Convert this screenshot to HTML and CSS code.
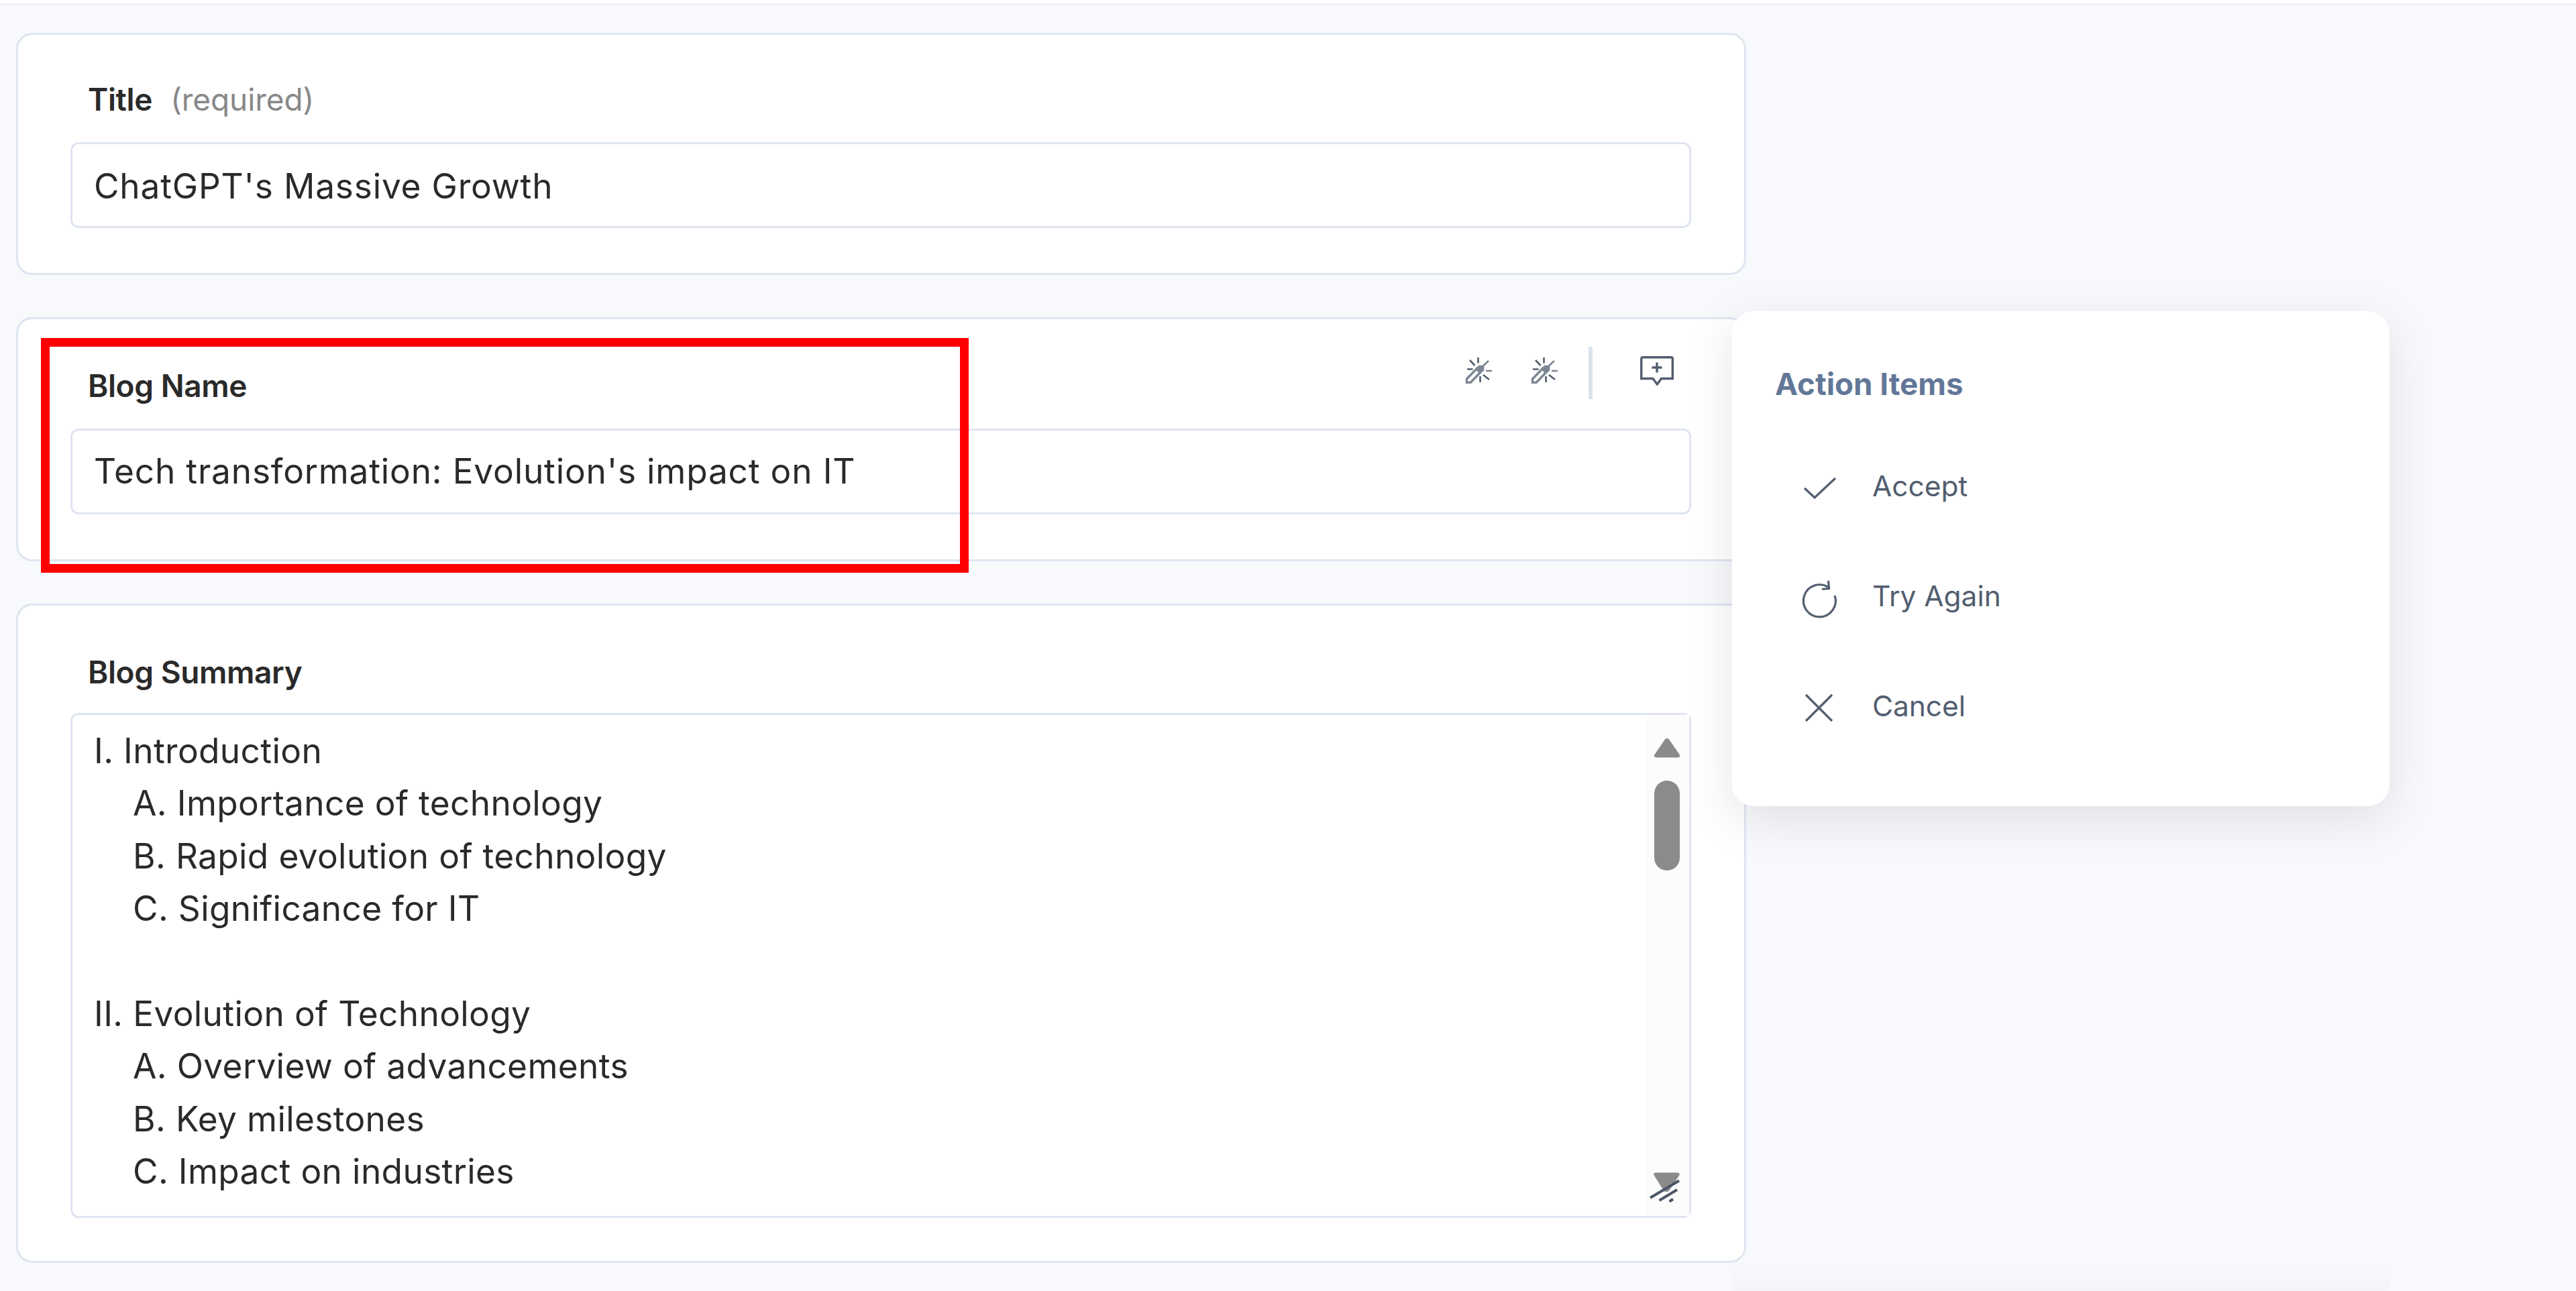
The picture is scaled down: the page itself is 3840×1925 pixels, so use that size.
FILE: index.html
```html
<!DOCTYPE html>
<html lang="en">
<head>
    <meta charset="UTF-8">
    <meta name="viewport" content="width=device-width, initial-scale=1.0">
    <title>Blog</title>
    <link rel="stylesheet" href="styles.css">
</head>
<body>
    <div class="topbar"></div>
    <main class="form">
        <section class="card">
            <div class="card-head">
                <label class="label">Title <span class="required">(required)</span></label>
            </div>
            <div class="field">ChatGPT's Massive Growth</div>
        </section>

        <section class="card card-name">
            <div class="card-head">
                <label class="label">Blog Name</label>
                <div class="tools">
                    <svg class="wand" viewBox="0 0 40 40"><use href="#wand"/></svg>
                    <svg class="wand" viewBox="0 0 40 40"><use href="#wand"/></svg>
                    <span class="divider"></span>
                    <svg class="comment" viewBox="0 0 50 44">
                        <path d="M4 1.7H46Q48.3 1.7 48.3 4V33.5H31.5L25.3 42L19 33.5H1.7V4Q1.7 1.7 4 1.7Z"/>
                        <path d="M25 9.5V24.5M17.5 17H32.5"/>
                    </svg>
                </div>
            </div>
            <div class="field">Tech transformation: Evolution's impact on IT</div>
            <div class="highlight"></div>

            <aside class="popup">
                <h2>Action Items</h2>
                <ul>
                    <li>
                        <svg class="icon" viewBox="0 0 56 56"><path d="M7 29L22 43L53 14"/></svg>
                        <span>Accept</span>
                    </li>
                    <li>
                        <svg class="icon" viewBox="0 0 56 56"><path d="M52 25A24 24 0 1 1 43.5 13.5M42.5 3L43.5 14.5L33 15.5"/></svg>
                        <span>Try Again</span>
                    </li>
                    <li>
                        <svg class="icon" viewBox="0 0 56 56"><path d="M9 9L48 48M48 9L9 48"/></svg>
                        <span>Cancel</span>
                    </li>
                </ul>
            </aside>
        </section>

        <section class="card card-summary">
            <div class="card-head">
                <label class="label">Blog Summary</label>
            </div>
            <div class="textarea">
                <div class="lines">
                    <p>I. Introduction</p>
                    <p class="sub">A. Importance of technology</p>
                    <p class="sub">B. Rapid evolution of technology</p>
                    <p class="sub">C. Significance for IT</p>
                    <p class="sub">&nbsp;</p>
                    <p>II. Evolution of Technology</p>
                    <p class="sub">A. Overview of advancements</p>
                    <p class="sub">B. Key milestones</p>
                    <p class="sub">C. Impact on industries</p>
                </div>
                <div class="scrollbar">
                    <svg class="arrow" viewBox="0 0 40 30"><path d="M17 2.5Q20 -1 23 2.5L38.5 25Q40.5 29 36.5 29.5H3.5Q-.5 29 1.5 25Z"/></svg>
                    <div class="thumb"></div>
                    <svg class="grip" viewBox="0 0 50 46">
                        <path class="down" d="M22 27.5Q26 31 30 27.5L45 5Q47 1 43 .5H10Q5.5 1 8 5Z"/>
                        <path class="line" d="M2 38L45 12.5M15.5 42L42 26M30.5 43.5L36 40"/>
                    </svg>
                </div>
            </div>
            <!-- shadow of the next popup -->
            <div class="popup-shade"></div>
        </section>
    </main>

    <svg width="0" height="0" class="defs">
        <symbol id="wand" viewBox="0 0 40 40">
            <g fill="none" stroke="#525e6f" stroke-width="2.6">
                <path d="M19.5 1V9.5M7 5L14.5 13M3 18.5H11.5M27 27L36 34M22.5 29V38"/>
                <path d="M35 6L27 13.5M31 21H40" stroke="#7c8592"/>
                <path d="M2.5 38.5V33L17.5 17.5L23 23L8 38.5Z" stroke="#7c8592" stroke-width="3.4"/>
                <path d="M17 18L21 14H27V20L22 24Z" fill="#7c8592" stroke="#7c8592"/>
            </g>
        </symbol>
    </svg>
</body>
</html>
```

FILE: styles.css
```css
* {
    box-sizing: border-box;
}
body {
    margin: 0;
    height: 1925px;
    overflow: hidden;
    background: #f7f9fd;
    color: #2a2a2a;
    font-family: Inter, "Liberation Sans", sans-serif;
}
.topbar {
    height: 8px;
    background: #fff;
    border-bottom: 3px solid #eef1f6;
}
.form {
    display: flex;
    flex-direction: column;
    gap: 63px;
    width: 2579px;
    margin: 41px 0 0 24px;
}
.card {
    position: relative;
    padding: 0 79px 67px 78px;
    border: 3px solid #dfe5f0;
    border-radius: 24px;
    background: #fff;
}
.card-head {
    display: flex;
    justify-content: space-between;
    height: 160px;
    padding: 66px 25px 0 26px;
}
.label {
    font-size: 46px;
    line-height: 60px;
    font-weight: 600;
    letter-spacing: -0.4px;
}
.required {
    margin-left: 16px;
    font-weight: 400;
    letter-spacing: -0.1px;
    color: #888;
}
.field {
    height: 128px;
    padding: 0 32px;
    border: 3px solid #dfe5f0;
    border-radius: 12px;
    font-size: 51.4px;
    line-height: 124px;
    letter-spacing: 0.8px;
}
.card-name .card-head {
    height: 163px;
    padding-top: 69px;
}
.card-name .field {
    line-height: 120px;
}
.tools {
    display: flex;
    align-items: center;
    height: 78px;
    margin-top: -28px;
}
.wand {
    width: 40px;
    height: 40px;
    margin: -8px 58px 0 0;
}
.divider {
    width: 6px;
    height: 78px;
    margin: 0 71px 0 -12px;
    background: #dbe2ee;
}
.comment {
    width: 50px;
    height: 44px;
    margin: -6px 1px 0 0;
    fill: none;
    stroke: #525e6f;
    stroke-width: 3.4;
}
.highlight {
    position: absolute;
    left: 34px;
    top: 28px;
    width: 1383px;
    height: 350px;
    border: 13px solid #f00;
}
.popup {
    position: absolute;
    z-index: 2;
    left: 2555px;
    top: -12px;
    width: 980px;
    height: 738px;
    padding: 73px 64px;
    border-radius: 32px;
    background: #fff;
    box-shadow: 0 20px 75px rgba(0, 0, 0, 0.1);
}
.popup h2 {
    margin: 0;
    font-size: 45.7px;
    line-height: 72px;
    font-weight: 700;
    color: #627798;
}
.popup ul {
    margin: 33px 0 0;
    padding: 0 0 0 37px;
    list-style: none;
}
.popup li {
    display: flex;
    align-items: center;
    gap: 52px;
    height: 164px;
    font-size: 42.4px;
    color: #525e6f;
}
.icon {
    width: 56px;
    height: 56px;
    margin-top: 6px;
    overflow: visible;
    fill: none;
    stroke: #525e6f;
    stroke-width: 3.2;
}
.card-summary {
    padding-bottom: 64px;
}
.card-summary .card-head {
    padding-top: 69px;
}
.popup-shade {
    position: absolute;
    left: 2555px;
    top: 986px;
    width: 980px;
    height: 35px;
    background: linear-gradient(rgba(0, 0, 0, 0), rgba(0, 0, 0, 0.02));
}
.textarea {
    display: flex;
    height: 753px;
    border: 3px solid #dfe5f0;
    border-radius: 12px;
}
.lines {
    flex: 1;
    padding: 14px 32px 0;
    font-size: 51.4px;
    line-height: 78.4px;
    letter-spacing: 0.34px;
}
.lines p {
    margin: 0;
}
.lines .sub {
    padding-left: 58px;
}
.scrollbar {
    display: flex;
    flex-direction: column;
    align-items: center;
    width: 64px;
    padding: 34px 2px 19px 0;
    background: #fcfcfc;
}
.arrow {
    width: 40px;
    height: 30px;
    fill: #8b8b8b;
}
.thumb {
    width: 38px;
    height: 134px;
    margin-top: 34px;
    border-radius: 19px;
    background: #8b8b8b;
}
.grip {
    width: 50px;
    height: 46px;
    margin: auto 4px 0 0;
}
.down {
    fill: #8b8b8b;
}
.line {
    fill: none;
    stroke: #4a5565;
    stroke-width: 4;
}
.defs {
    position: absolute;
}
```
